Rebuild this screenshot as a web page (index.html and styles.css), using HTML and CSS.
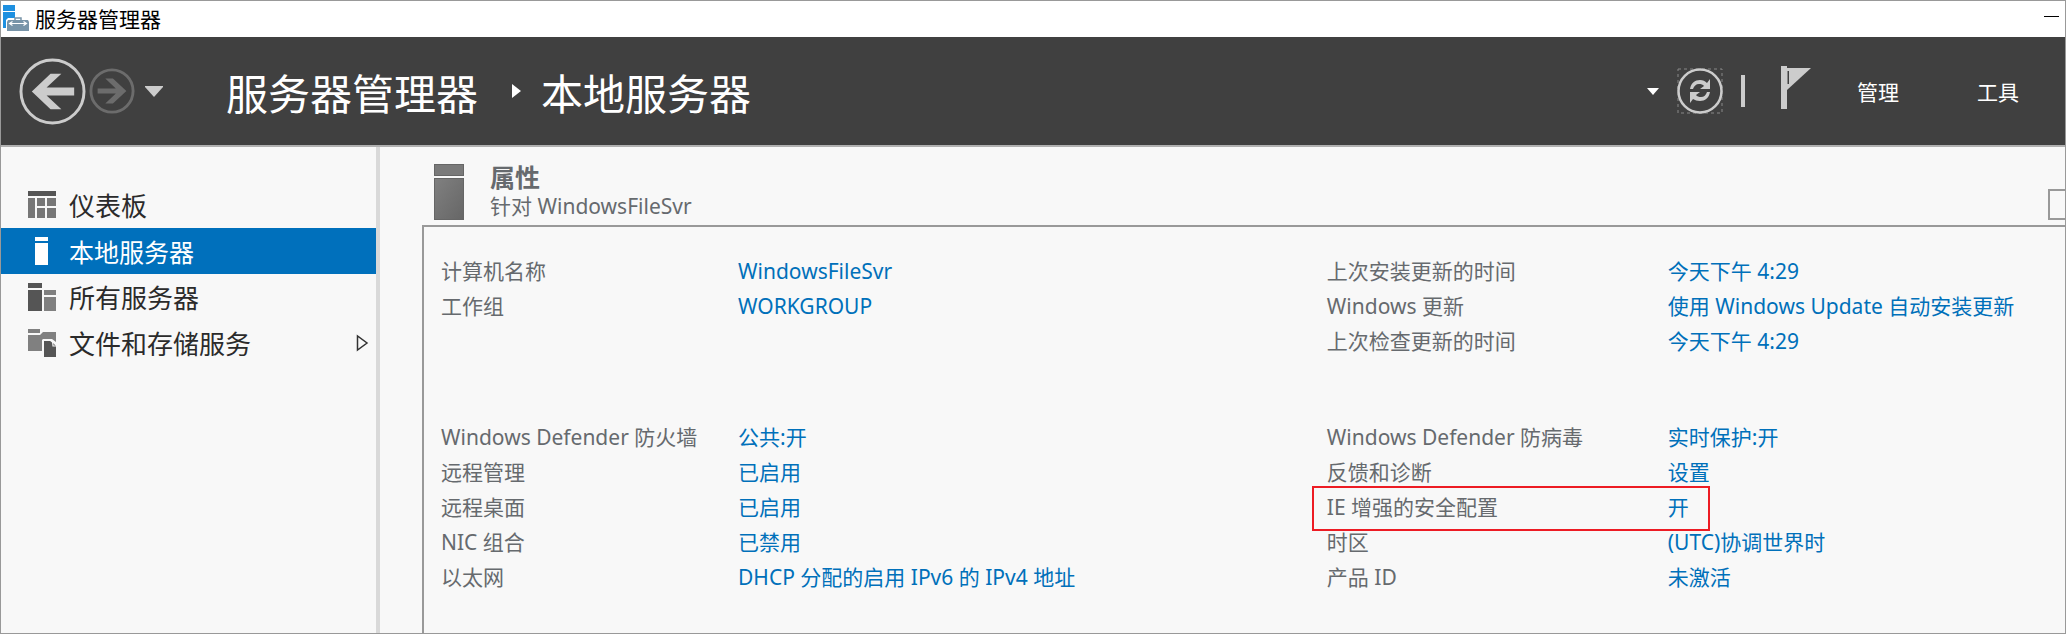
FILE: index.html
```html
<!DOCTYPE html>
<html lang="zh-CN">
<head>
    <meta charset="UTF-8">
    <meta name="viewport" content="width=device-width, initial-scale=1.0">
    <title>服务器管理器</title>
    <link rel="stylesheet" href="styles.css">
</head>
<body>
    <div class="window">
        <div class="titlebar">
            <svg width="28" height="28" viewBox="0 0 28 28">
                <path d="M1 1h12v6H1zM1 8h12v6H6l-2 2v8H1z" fill="#1e90e0"/>
                <path d="M13 16v-2h6v2" fill="none" stroke="#7894a8" stroke-width="1.500"/>
                <path d="M6 16h20l1 2v9H5v-9z" fill="#7894a8"/>
                <path d="M8 19.500h16M10.500 17.500l-3 2 3 2M21.500 17.500l3 2-3 2" fill="none" stroke="#fff" stroke-width="1.200"/>
            </svg>
            <span class="titlebar-text">服务器管理器</span>
            <button class="minimize" aria-label="最小化"></button>
        </div>

        <header class="header">
            <nav class="history">
                <button aria-label="后退">
                    <svg width="67" height="67" viewBox="0 0 68 68">
                        <circle cx="34" cy="34" r="32" fill="none" stroke="#ccc" stroke-width="3"/>
                        <path d="M13 34L32 16h11L28 30h28v8H28l15 14H32z" fill="#ccc"/>
                    </svg>
                </button>
                <button aria-label="前进">
                    <svg width="46" height="46" viewBox="0 0 48 48">
                        <circle cx="24" cy="24" r="22" fill="none" stroke="#6c6c6c" stroke-width="3"/>
                        <path d="M39 24L25 37h-8l11-10.500H9v-5h19L17 11h8z" fill="#6c6c6c"/>
                    </svg>
                </button>
                <button aria-label="历史记录">
                    <svg width="18" height="11" viewBox="0 0 18 11"><path d="M0 0h18v1l-9 10L0 1z" fill="#ccc"/></svg>
                </button>
            </nav>
            <h1 class="breadcrumb">
                <span>服务器管理器</span>
                <svg width="9" height="14" viewBox="0 0 9 14"><path d="M0 0l9 7-9 7z" fill="#fff"/></svg>
                <span>本地服务器</span>
            </h1>
            <div class="tools">
                <button aria-label="刷新选项">
                    <svg width="12" height="7" viewBox="0 0 12 7"><path d="M0 0h12L6 7z" fill="#fff"/></svg>
                </button>
                <button class="refresh" aria-label="刷新">
                    <svg width="46" height="46" viewBox="0 0 46 46">
                        <rect x="1" y="1" width="44" height="44" fill="none" stroke="#888" stroke-dasharray="3 3"/>
                        <circle cx="23" cy="23" r="21.500" fill="none" stroke="#ccc" stroke-width="2.500"/>
                        <path d="M13 21c1-6 5-9 10-9 3 0 5 1 7 3l3-4v10H23l4-3c-1-1.500-3-2-5-2-3 0-5 2-6 5z" fill="#ccc"/>
                        <path d="M33 24c-1 6-5 9-10 9-3 0-5-1-7-2l-3 4V24h10l-4 3c1 1.500 3 2 5 2 3 0 5-2 6-5z" fill="#ccc"/>
                    </svg>
                </button>
                <span class="separator"></span>
                <button class="flag" aria-label="通知">
                    <svg width="30" height="43" viewBox="0 0 30 43">
                        <path d="M0 0h6v43H0z" fill="#ccc"/>
                        <path d="M6 2h24L6 24z" fill="#ccc"/>
                        <path d="M6.500 5H8v13H6.500z" fill="#404040"/>
                    </svg>
                </button>
                <button class="menu">管理</button>
                <button class="menu">工具</button>
            </div>
        </header>

        <div class="body">
            <nav class="sidebar">
                <a href="#">
                    <svg width="28" height="28" viewBox="0 0 28 28">
                        <path d="M0 0h28v5H0z" fill="#555"/>
                        <path d="M0 7h7v20H0zM9 7h8v8H9zM19 7h9v8h-9zM9 17h8v10H9zM19 17h9v10h-9z" fill="#777"/>
                    </svg>
                    仪表板
                </a>
                <a href="#" class="active" aria-current="page">
                    <svg width="28" height="28" viewBox="0 0 28 28"><path d="M7 0h13v4H7zM7 6h13v22H7z" fill="#fff"/></svg>
                    本地服务器
                </a>
                <a href="#">
                    <svg width="28" height="28" viewBox="0 0 28 28">
                        <path d="M0 0h14v5H0zM0 7h14v21H0z" fill="#555"/>
                        <path d="M16 7h12v5H16zM16 14h12v14H16z" fill="#808080"/>
                    </svg>
                    所有服务器
                </a>
                <a href="#">
                    <svg width="28" height="28" viewBox="0 0 28 28">
                        <path d="M0 0h12v4H0zM0 6h12l3-3h13v10l-4-3h-9l-1 1v11H0z" fill="#808080"/>
                        <path d="M16 12h7l5 5v11H16z" fill="#555"/>
                        <path d="M22.500 12c2 0 2.500 2 2.500 5h3" fill="none" stroke="#f8f8f8" stroke-width="1.200"/>
                    </svg>
                    文件和存储服务
                    <svg class="expand" width="13" height="18" viewBox="0 0 13 18"><path d="M1.500 2v14l9.500-7z" fill="none" stroke="#333" stroke-width="1.500"/></svg>
                </a>
            </nav>

            <main class="content">
                <div class="panel-header">
                    <svg width="30" height="56" viewBox="0 0 30 56">
                        <defs>
                            <linearGradient id="tower" x1="0" y1="0" x2="1" y2="1">
                                <stop offset="0" stop-color="#808080"/>
                                <stop offset="1" stop-color="#666"/>
                            </linearGradient>
                        </defs>
                        <rect x="0.500" y="0.500" width="29" height="11" fill="#7a7a7a" stroke="#666"/>
                        <rect x="0.500" y="14.500" width="29" height="41" fill="url(#tower)" stroke="#666"/>
                    </svg>
                    <div class="panel-title">
                        <h2>属性</h2>
                        <p>针对 WindowsFileSvr</p>
                    </div>
                    <button class="tasks" aria-label="任务"></button>
                </div>

                <div class="properties">
                    <dl>
                        <div><dt>计算机名称</dt><dd><a href="#">WindowsFileSvr</a></dd></div>
                        <div><dt>工作组</dt><dd><a href="#">WORKGROUP</a></dd></div>
                    </dl>
                    <dl class="wide">
                        <div><dt>上次安装更新的时间</dt><dd><a href="#">今天下午 4:29</a></dd></div>
                        <div><dt>Windows 更新</dt><dd><a href="#">使用 Windows Update 自动安装更新</a></dd></div>
                        <div><dt>上次检查更新的时间</dt><dd><a href="#">今天下午 4:29</a></dd></div>
                    </dl>
                    <dl>
                        <div><dt>Windows Defender 防火墙</dt><dd><a href="#">公共:开</a></dd></div>
                        <div><dt>远程管理</dt><dd><a href="#">已启用</a></dd></div>
                        <div><dt>远程桌面</dt><dd><a href="#">已启用</a></dd></div>
                        <div><dt>NIC 组合</dt><dd><a href="#">已禁用</a></dd></div>
                        <div><dt>以太网</dt><dd><a href="#">DHCP 分配的启用 IPv6 的 IPv4 地址</a></dd></div>
                    </dl>
                    <dl class="wide">
                        <div><dt>Windows Defender 防病毒</dt><dd><a href="#">实时保护:开</a></dd></div>
                        <div><dt>反馈和诊断</dt><dd><a href="#">设置</a></dd></div>
                        <div class="highlight"><dt>IE 增强的安全配置</dt><dd><a href="#">开</a></dd></div>
                        <div><dt>时区</dt><dd><a href="#">(UTC)协调世界时</a></dd></div>
                        <div><dt>产品 ID</dt><dd><a href="#">未激活</a></dd></div>
                    </dl>
                </div>
            </main>
        </div>
    </div>
</body>
</html>
```
FILE: styles.css
```css
*, *::after {
    box-sizing: border-box;
}
body {
    margin: 0;
    font-family: "Noto Sans", "Noto Sans CJK SC", sans-serif;
    font-size: 21px;
    color: #666a6e;
    background-color: #f8f8f8;
}
h1, h2, p, dl, dd {
    margin: 0;
}
a {
    color: #0070ba;
    text-decoration: none;
}
button {
    padding: 0;
    border: none;
    background: none;
    font: inherit;
    color: inherit;
    cursor: pointer;
}
svg {
    display: block;
    flex-shrink: 0;
}
.window {
    display: flex;
    flex-direction: column;
    min-height: 100vh;
    border: 1px solid #999;
}

/* title bar */
.titlebar {
    display: flex;
    align-items: center;
    height: 36px;
    padding: 0 6px 3px 1px;
    background-color: #fff;
    color: #000;
}
.titlebar-text {
    margin-left: 5px;
}
.minimize {
    width: 15px;
    height: 16px;
    margin-left: auto;
    border-bottom: 1px solid #000;
    align-self: flex-start;
}

/* dark header */
.header {
    display: flex;
    align-items: center;
    height: 110px;
    border-bottom: 2px solid #b0b0b0;
    background-color: #404040;
    color: #fff;
}
.history {
    display: flex;
    align-items: center;
    gap: 3px;
    padding-left: 18px;
}
.history button:last-child {
    margin-left: 7px;
}
.breadcrumb {
    display: flex;
    align-items: center;
    margin-left: 63px;
    padding-top: 6px;
    font-size: 42px;
    font-weight: 400;
    line-height: 60px;
}
.breadcrumb svg {
    margin: 0 20px 6px 34px;
}
.tools {
    display: flex;
    align-items: center;
    margin-left: auto;
    padding-right: 46px;
}
.refresh {
    margin-left: 18px;
}
.separator {
    width: 4px;
    height: 32px;
    margin-left: 18px;
    background-color: #ccc;
}
.flag {
    margin: 0 46px 8px 36px;
}
.menu + .menu {
    margin-left: 78px;
}

/* left navigation */
.body {
    display: flex;
    flex: 1;
}
.sidebar {
    flex: 0 0 379px;
    padding-top: 35px;
    border-right: 4px solid #d9d9d9;
}
.sidebar a {
    display: flex;
    align-items: center;
    gap: 13px;
    height: 46px;
    padding: 0 7px 1px 27px;
    font-size: 26px;
    color: #2b2b2b;
}
.sidebar .active {
    background-color: #0070bc;
    font-size: 25px;
    color: #fff;
}
.expand {
    margin-left: auto;
}

/* properties panel */
.content {
    flex: 1;
    display: flex;
    flex-direction: column;
    padding-left: 42px;
}
.panel-header {
    display: flex;
    align-items: flex-start;
    height: 78px;
    padding: 17px 0 0 12px;
}
.panel-title {
    margin-left: 26px;
}
.panel-title h2 {
    font-size: 25px;
    font-weight: 700;
    line-height: 27px;
}
.panel-title p {
    line-height: 30px;
}
.tasks {
    width: 17px;
    height: 31px;
    margin: 25px 0 0 auto;
    border: 2px solid #999;
    border-right: none;
}
.properties {
    flex: 1;
    display: grid;
    grid-template-columns: 6fr 5fr;
    align-content: start;
    row-gap: 61px;
    padding: 27px 0 36px 17px;
    border-top: 2px solid #999;
    border-left: 2px solid #999;
    line-height: 35px;
}
.properties dl > div {
    display: grid;
    grid-template-columns: 297px 1fr;
}
.properties .wide > div {
    grid-template-columns: 341px 1fr;
}
.highlight {
    position: relative;
}
.highlight::after {
    content: "";
    position: absolute;
    top: -4px;
    left: -15px;
    width: 398px;
    height: 45px;
    border: 2px solid #ed1c24;
    pointer-events: none;
}
```
